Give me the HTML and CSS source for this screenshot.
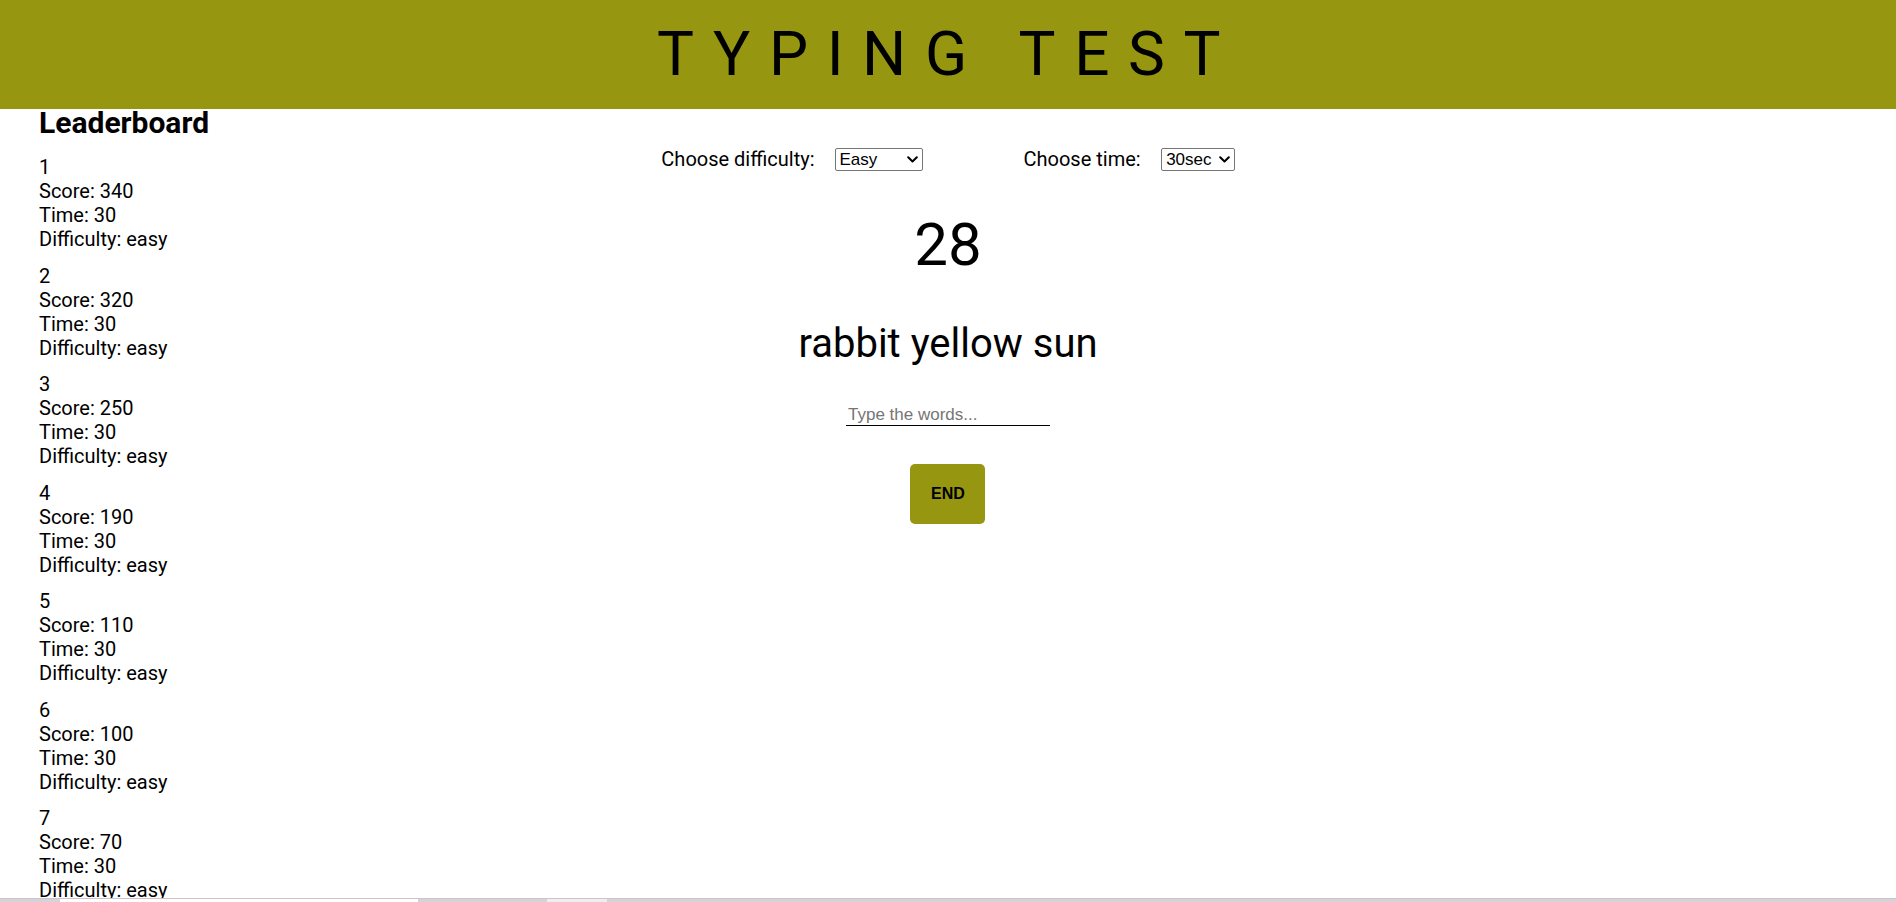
FILE: index.html
```html
<!DOCTYPE html>
<html lang="en">
<head>
<meta charset="utf-8">
<title>Typing Test</title>
<link rel="stylesheet" href="styles.css">
</head>
<body>
<header class="topbar">
  <h1 class="title">TYPING TEST</h1>
</header>
<div class="layout">
  <aside class="leaderboard">
    <h2 class="lb-title">Leaderboard</h2>
    <ol class="lb-list">
      <li class="lb-entry"><div>1</div><div>Score: 340</div><div>Time: 30</div><div>Difficulty: easy</div></li>
      <li class="lb-entry"><div>2</div><div>Score: 320</div><div>Time: 30</div><div>Difficulty: easy</div></li>
      <li class="lb-entry"><div>3</div><div>Score: 250</div><div>Time: 30</div><div>Difficulty: easy</div></li>
      <li class="lb-entry"><div>4</div><div>Score: 190</div><div>Time: 30</div><div>Difficulty: easy</div></li>
      <li class="lb-entry"><div>5</div><div>Score: 110</div><div>Time: 30</div><div>Difficulty: easy</div></li>
      <li class="lb-entry"><div>6</div><div>Score: 100</div><div>Time: 30</div><div>Difficulty: easy</div></li>
      <li class="lb-entry"><div>7</div><div>Score: 70</div><div>Time: 30</div><div>Difficulty: easy</div></li>
    </ol>
  </aside>
  <main class="game">
    <div class="settings">
      <div class="setting setting-difficulty">
        <label class="setting-label" for="difficulty">Choose difficulty:</label>
        <span class="select-wrap">
          <select id="difficulty" class="select select-difficulty">
            <option>Easy</option>
            <option>Medium</option>
            <option>Hard</option>
          </select>
          <svg class="chevron" viewBox="0 0 11 7" width="11" height="7" aria-hidden="true"><path d="M1.2 1.2 L5.5 5.5 L9.8 1.2" fill="none" stroke="#000" stroke-width="2" stroke-linecap="round" stroke-linejoin="round"/></svg>
        </span>
      </div>
      <div class="setting setting-time">
        <label class="setting-label" for="time">Choose time:</label>
        <span class="select-wrap">
          <select id="time" class="select select-time">
            <option>30sec</option>
            <option>60sec</option>
            <option>90sec</option>
          </select>
          <svg class="chevron" viewBox="0 0 11 7" width="11" height="7" aria-hidden="true"><path d="M1.2 1.2 L5.5 5.5 L9.8 1.2" fill="none" stroke="#000" stroke-width="2" stroke-linecap="round" stroke-linejoin="round"/></svg>
        </span>
      </div>
    </div>
    <div class="timer">28</div>
    <div class="words">rabbit yellow sun</div>
    <input class="type-input" type="text" placeholder="Type the words...">
    <button class="end-btn" type="button">END</button>
  </main>
  <div class="spacer"></div>
</div>
<div class="screen-edge">
  <span class="edge-seg edge-seg-a"></span>
  <span class="edge-seg edge-seg-b"></span>
</div>
</body>
</html>
```
FILE: styles.css
```css
html, body {
  margin: 0;
  padding: 0;
  overflow: hidden;
  background: #ffffff;
}

body {
  font-family: Roboto, "Liberation Sans", Arial, sans-serif;
  color: #000;
  height: 902px;
}

.topbar {
  background: #969611;
  height: 109px;
  box-sizing: border-box;
  padding-top: 17px;
}

.title {
  margin: 0;
  font-family: Roboto, sans-serif;
  font-weight: 400;
  font-size: 62px;
  line-height: normal;
  letter-spacing: 0.3em;
  text-align: center;
  color: #000;
}

.layout {
  display: grid;
  grid-template-columns: 1fr auto 1fr;
}

.leaderboard {
  padding-left: 39px;
}

.lb-title {
  margin: 0 0 18px 0;
  font-size: 30px;
  line-height: 28px;
  font-weight: 700;
}

.lb-list {
  list-style: none;
  margin: 0;
  padding: 0;
}

.lb-entry {
  font-size: 20px;
  line-height: 24px;
  margin-bottom: 12.5px;
}

.game {
  display: flex;
  flex-direction: column;
  align-items: center;
  gap: 38.6px;
  padding-top: 38px;
}

.settings {
  display: flex;
  align-items: center;
  gap: 101px;
  height: 24px;
}

.setting {
  display: flex;
  align-items: center;
}

.setting-label {
  font-size: 20px;
  line-height: 24px;
}

.setting-difficulty .setting-label {
  margin-right: 20px;
}

.setting-time .setting-label {
  margin-right: 20.5px;
}

.select-wrap {
  position: relative;
  display: inline-block;
  height: 23px;
}

.select {
  appearance: none;
  -webkit-appearance: none;
  box-sizing: border-box;
  height: 23px;
  margin: 0;
  padding: 0 0 0 4px;
  border: 1px solid #767676;
  border-radius: 2px;
  background: #fff;
  color: #000;
  font-family: "Liberation Sans", Arial, sans-serif;
  font-size: 17px;
  line-height: 21px;
}

.select-difficulty {
  width: 88px;
}

.select-time {
  width: 73.5px;
}

.chevron {
  position: absolute;
  right: 5px;
  top: 8px;
  pointer-events: none;
}

.timer {
  font-size: 60px;
  line-height: 70px;
}

.words {
  font-size: 40px;
  line-height: 47px;
  margin-top: 2px;
}

.type-input {
  box-sizing: border-box;
  width: 204px;
  margin: -2px 0 0 0;
  padding: 1px 2px;
  border: none;
  border-bottom: 1px solid #000;
  outline: none;
  background: transparent;
  font-family: "Liberation Sans", Arial, sans-serif;
  font-size: 17px;
  line-height: 19px;
  color: #000;
}

.type-input::placeholder {
  color: #757575;
}

.end-btn {
  box-sizing: border-box;
  height: 60px;
  width: 75px;
  margin: 0;
  padding: 0;
  border: none;
  border-radius: 5px;
  background: #969611;
  color: #000;
  font-family: "Liberation Sans", Arial, sans-serif;
  font-weight: 700;
  font-size: 16px;
}

.screen-edge {
  position: fixed;
  left: 0;
  right: 0;
  bottom: 0;
  height: 4px;
  background: #d5d2d9;
  border-top: 1px solid #c8c5cc;
  box-sizing: border-box;
}

.edge-seg {
  position: absolute;
  bottom: 0;
  height: 3px;
}

.edge-seg-a {
  left: 60px;
  width: 358px;
  background: #ffffff;
}

.edge-seg-b {
  left: 547px;
  width: 60px;
  background: #eeedf0;
}
```
